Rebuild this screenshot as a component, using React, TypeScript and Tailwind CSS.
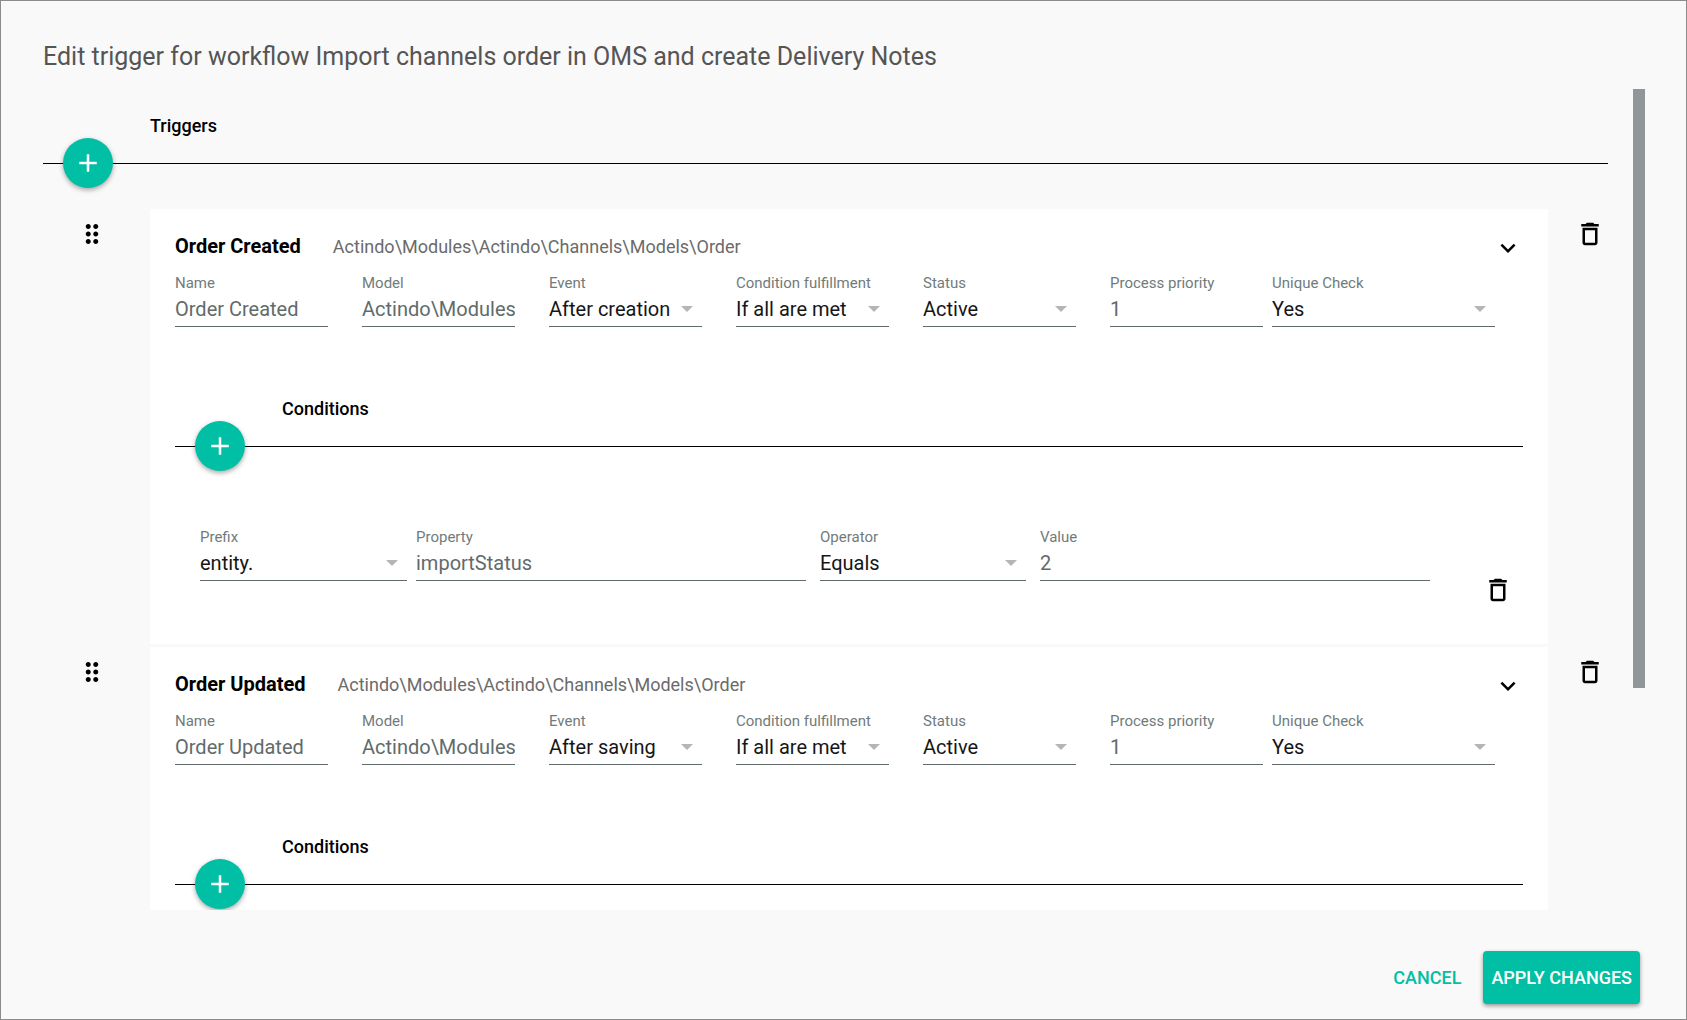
import { useId } from "react";

type Condition = { prefix: string; property: string; operator: string; value: string };
type Trigger = {
  name: string;
  model: string;
  event: string;
  fulfillment: string;
  status: string;
  priority: string;
  unique: string;
  conditions: Condition[];
};

const MODEL = "Actindo\\Modules\\Actindo\\Channels\\Models\\Order";

const triggers: Trigger[] = [
  {
    name: "Order Created",
    model: MODEL,
    event: "After creation",
    fulfillment: "If all are met",
    status: "Active",
    priority: "1",
    unique: "Yes",
    conditions: [{ prefix: "entity.", property: "importStatus", operator: "Equals", value: "2" }],
  },
  {
    name: "Order Updated",
    model: MODEL,
    event: "After saving",
    fulfillment: "If all are met",
    status: "Active",
    priority: "1",
    unique: "Yes",
    conditions: [],
  },
];

function Icon({ d }: { d: string }) {
  return (
    <svg viewBox="0 0 24 24" className="block size-[30px]" fill="currentColor" aria-hidden="true">
      <path d={d} />
    </svg>
  );
}

const TRASH =
  "M6 19c0 1.1.9 2 2 2h8c1.1 0 2-.9 2-2V7H6v12zM8 9h8v10H8V9zm7.5-5l-1-1h-5l-1 1H5v2h14V4z";
const PLUS = "M19 13h-6v6h-2v-6H5v-2h6V5h2v6h6v2z";
const CHEVRON = "M16.59 8.59L12 13.17 7.41 8.59 6 10l6 6 6-6z";
const DRAG =
  "M11 18c0 1.1-.9 2-2 2s-2-.9-2-2 .9-2 2-2 2 .9 2 2zm-2-8c-1.1 0-2 .9-2 2s.9 2 2 2 2-.9 2-2-.9-2-2-2zm0-6c-1.1 0-2 .9-2 2s.9 2 2 2 2-.9 2-2-.9-2-2-2zm6 4c1.1 0 2-.9 2-2s-.9-2-2-2-2 .9-2 2 .9 2 2 2zm0 2c-1.1 0-2 .9-2 2s.9 2 2 2 2-.9 2-2-.9-2-2-2zm0 6c-1.1 0-2 .9-2 2s.9 2 2 2 2-.9 2-2-.9-2-2-2z";

function TextField({ label, value }: { label: string; value: string }) {
  const id = useId();
  return (
    <div className="min-w-0">
      <label htmlFor={id} className="block text-[15px] leading-5 text-[#717b7b]">
        {label}
      </label>
      <input
        id={id}
        defaultValue={value}
        className="block h-[34px] w-full border-b border-[#616b6b] bg-transparent pb-[2px] text-[20px] text-[#616b6b] outline-none"
      />
    </div>
  );
}

function SelectField({ label, value }: { label: string; value: string }) {
  const id = useId();
  return (
    <div className="min-w-0">
      <label htmlFor={id} className="block text-[15px] leading-5 text-[#717b7b]">
        {label}
      </label>
      <div className="relative">
        <select
          id={id}
          defaultValue={value}
          className="block h-[34px] w-full appearance-none border-b border-[#616b6b] bg-transparent pb-[2px] text-[20px] text-[#161616] outline-none"
        >
          <option>{value}</option>
        </select>
        <svg
          viewBox="0 0 12 6"
          className="pointer-events-none absolute top-[13px] right-[9px] h-[6px] w-[12px] fill-[#b5b5b5]"
          aria-hidden="true"
        >
          <path d="M0 0h12L6 6z" />
        </svg>
      </div>
    </div>
  );
}

function SectionHeading({ title, action }: { title: string; action: string }) {
  return (
    <div className="relative border-b border-black pb-[25px] pl-[107px]">
      <h2 className="text-[18px] leading-6 font-medium text-black">{title}</h2>
      <button
        type="button"
        aria-label={action}
        className="absolute -bottom-[25px] left-5 flex size-[50px] items-center justify-center rounded-full bg-[#00bfa5] text-white shadow-[0_2px_5px_rgba(0,0,0,0.35)]"
      >
        <Icon d={PLUS} />
      </button>
    </div>
  );
}

function ConditionRow({ condition }: { condition: Condition }) {
  return (
    <div className="flex items-start gap-[53px] pr-[10px] pl-[25px]">
      <div className="grid flex-1 grid-cols-[606fr_610fr] gap-[14px]">
        <div className="grid grid-cols-[207fr_390fr] gap-[9px]">
          <SelectField label="Prefix" value={condition.prefix} />
          <TextField label="Property" value={condition.property} />
        </div>
        <div className="grid grid-cols-[206fr_390fr] gap-[14px]">
          <SelectField label="Operator" value={condition.operator} />
          <TextField label="Value" value={condition.value} />
        </div>
      </div>
      <button type="button" aria-label="Delete condition" className="mt-12 text-black">
        <Icon d={TRASH} />
      </button>
    </div>
  );
}

function TriggerRow({ trigger }: { trigger: Trigger }) {
  return (
    <li className="flex items-start">
      <div className="w-[107px] shrink-0 pt-[10px] pl-[34px]">
        <button type="button" aria-label="Reorder trigger" className="block cursor-grab text-black">
          <Icon d={DRAG} />
        </button>
      </div>
      <article className="min-w-0 flex-1 bg-white px-[25px] pt-[22px] pb-[39px]">
        <header className="flex h-[30px] items-center">
          <h3 className="text-[20px] font-bold text-black">{trigger.name}</h3>
          <p className="ml-8 text-[18px] text-[#6b6b6b]">{trigger.model}</p>
          <button type="button" aria-label="Collapse trigger" className="mt-1 ml-auto text-black">
            <Icon d={CHEVRON} />
          </button>
        </header>
        <div className="mt-3 grid grid-cols-[1088fr_223fr] gap-[9px] pr-[28px]">
          <div className="grid grid-cols-6 gap-[34px]">
            <TextField label="Name" value={trigger.name} />
            <TextField label="Model" value={trigger.model} />
            <SelectField label="Event" value={trigger.event} />
            <SelectField label="Condition fulfillment" value={trigger.fulfillment} />
            <SelectField label="Status" value={trigger.status} />
            <TextField label="Process priority" value={trigger.priority} />
          </div>
          <SelectField label="Unique Check" value={trigger.unique} />
        </div>
        <div className="mt-[70px]">
          <SectionHeading title="Conditions" action="Add condition" />
          <div className="min-h-[158px] pt-20">
            {trigger.conditions.map((condition) => (
              <ConditionRow key={condition.property} condition={condition} />
            ))}
          </div>
        </div>
      </article>
      <div className="flex w-[60px] shrink-0 justify-end pt-[10px] pr-[3px]">
        <button type="button" aria-label="Delete trigger" className="block text-black">
          <Icon d={TRASH} />
        </button>
      </div>
    </li>
  );
}

export default function App() {
  return (
    <div className="flex h-screen flex-col border border-[#8c8c8c] bg-[#f9f9f9] font-['Roboto',sans-serif]">
      <h1 className="px-[42px] pt-[40px] pb-4 text-[25px] leading-8 text-[#555555]">
        Edit trigger for workflow Import channels order in OMS and create Delivery Notes
      </h1>
      <div className="flex min-h-0 flex-1 gap-[25px] pr-[41px] pl-[42px]">
        <main className="min-w-0 flex-1 overflow-y-auto pt-[25px] pb-[45px] [scrollbar-width:none]">
          <SectionHeading title="Triggers" action="Add trigger" />
          <ul className="mt-[45px] flex flex-col gap-[3px]">
            {triggers.map((trigger) => (
              <TriggerRow key={trigger.name} trigger={trigger} />
            ))}
          </ul>
        </main>
        <div className="h-[73%] w-3 bg-[#919699]" />
      </div>
      <footer className="flex items-center justify-end gap-[14px] pt-[41px] pr-[46px] pb-[15px]">
        <button type="button" className="h-[53px] px-2 text-[18px] font-medium text-[#00bfa5]">
          CANCEL
        </button>
        <button
          type="button"
          className="h-[53px] rounded bg-[#00bfa5] px-2 text-[18px] font-medium text-white shadow-[0_2px_4px_rgba(0,0,0,0.4)]"
        >
          APPLY CHANGES
        </button>
      </footer>
    </div>
  );
}
